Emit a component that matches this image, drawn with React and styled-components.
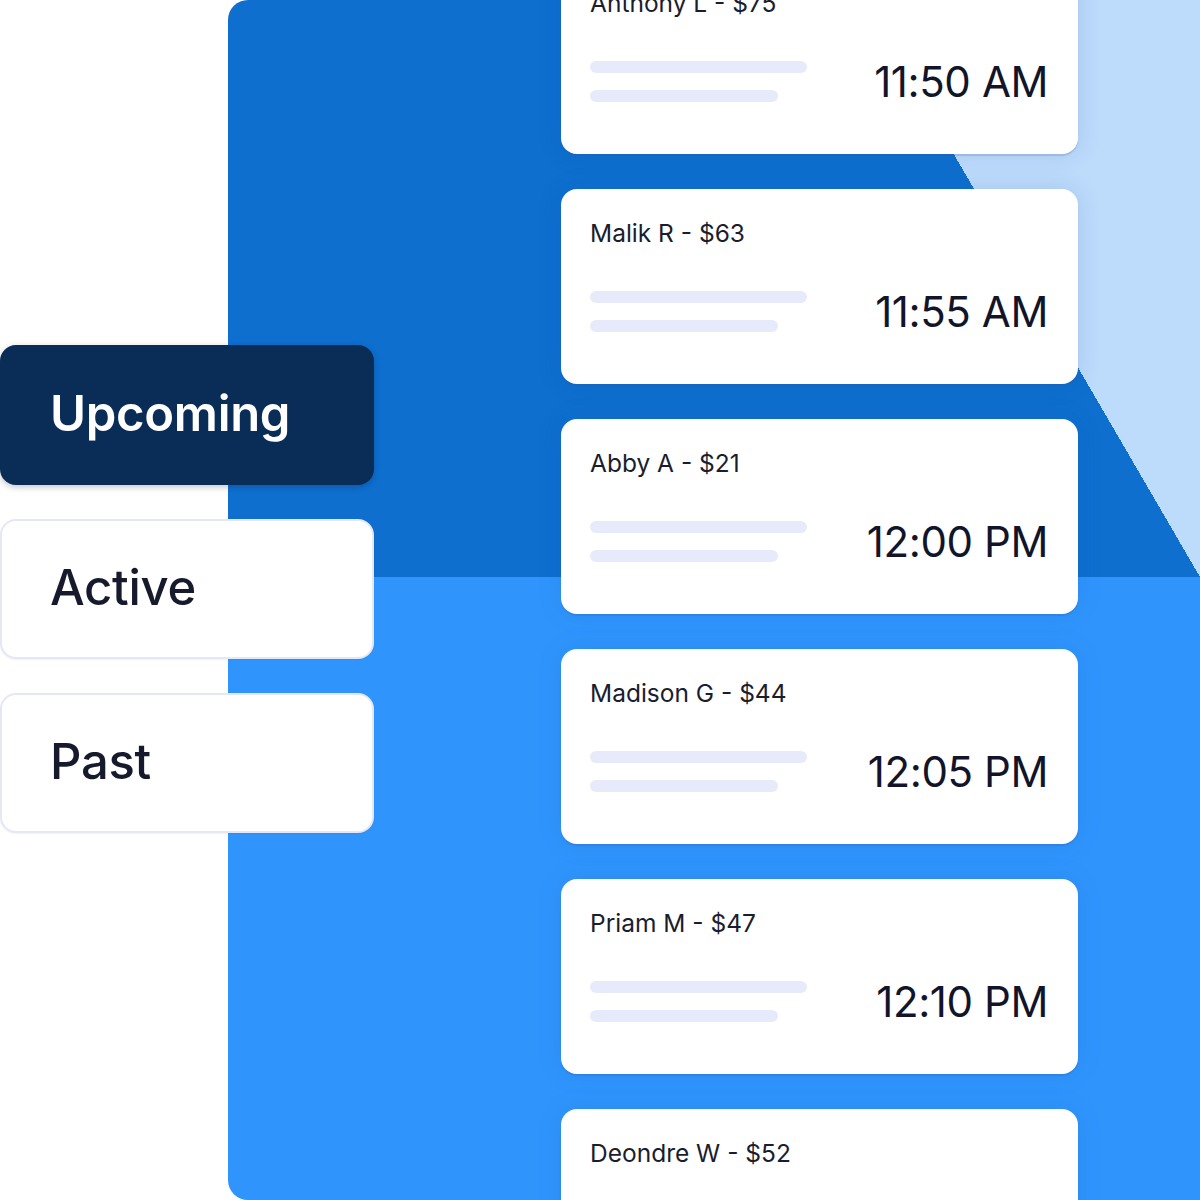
import React from "react";
import styled, { createGlobalStyle } from "styled-components";

const Global = createGlobalStyle`
  html, body { margin: 0; padding: 0; background: #ffffff; }
  body { font-family: Inter, "Noto Sans", sans-serif; }
`;

const Page = styled.div`
  width: 1200px;
  height: 1200px;
  overflow: hidden;
  padding-left: 228px;
  box-sizing: border-box;
  background: #ffffff;
`;

const Panel = styled.div`
  height: 1200px;
  border-radius: 20px 0 0 20px;
  display: flex;
  align-items: flex-start;
  background:
    linear-gradient(to top right, transparent 50%, #bddbfb 50%) right top / 336px 577px no-repeat,
    linear-gradient(to bottom, #0e6fcf 577px, #2f95fd 577px);
`;

const TabList = styled.div`
  margin-left: -228px;
  margin-top: 345px;
  width: 374px;
  flex: none;
  display: flex;
  flex-direction: column;
  gap: 34px;
`;

const Tab = styled.div`
  height: 140px;
  box-sizing: border-box;
  border-radius: 16px;
  display: flex;
  align-items: center;
  padding-left: 48px;
  padding-bottom: 3px;
  font-size: 49px;
  letter-spacing: -0.3px;
  font-weight: ${(p) => (p.$active ? 600 : 500)};
  color: ${(p) => (p.$active ? "#ffffff" : "#161a2c")};
  background: ${(p) => (p.$active ? "#092d56" : "#ffffff")};
  border: 2px solid ${(p) => (p.$active ? "#092d56" : "#e6e7f5")};
  box-shadow: ${(p) =>
    p.$active ? "0 2px 6px rgba(5, 20, 50, 0.25)" : "0 1px 2px rgba(20, 30, 80, 0.06)"};
`;

const CardColumn = styled.div`
  margin-left: 187px;
  margin-top: -41px;
  width: 517px;
  flex: none;
  display: flex;
  flex-direction: column;
  gap: 35px;
`;

const Card = styled.div`
  height: 195px;
  box-sizing: border-box;
  background: #ffffff;
  border-radius: 16px;
  padding: 30px 30px 0 29px;
  display: flex;
  flex-direction: column;
  box-shadow: 0 2px 1px rgba(60, 80, 140, 0.18), 0 0 24px rgba(20, 70, 150, 0.14);
`;

const Name = styled.div`
  font-size: 24.5px;
  line-height: 29px;
  font-weight: 400;
  color: #1a1d2e;
`;

const Row = styled.div`
  margin-top: 38px;
  display: flex;
  align-items: center;
  justify-content: space-between;
`;

const Bars = styled.div`
  display: flex;
  flex-direction: column;
  gap: 17px;
`;

const Bar = styled.div`
  height: 12px;
  width: ${(p) => p.$w}px;
  border-radius: 6px;
  background: #e7eafa;
`;

const Time = styled.div`
  font-size: 42px;
  line-height: 51px;
  font-weight: 400;
  color: #12152a;
  letter-spacing: -0.4px;
`;

const appointments = [
  { name: "Anthony L - $75", time: "11:50 AM" },
  { name: "Malik R - $63", time: "11:55 AM" },
  { name: "Abby A - $21", time: "12:00 PM" },
  { name: "Madison G - $44", time: "12:05 PM" },
  { name: "Priam M - $47", time: "12:10 PM" },
  { name: "Deondre W - $52", time: "12:15 PM" },
];

export default function App() {
  return (
    <>
      <Global />
      <Page>
        <Panel>
          <TabList>
            <Tab $active>Upcoming</Tab>
            <Tab>Active</Tab>
            <Tab>Past</Tab>
          </TabList>
          <CardColumn>
            {appointments.map((a) => (
              <Card key={a.name}>
                <Name>{a.name}</Name>
                <Row>
                  <Bars>
                    <Bar $w={217} />
                    <Bar $w={188} />
                  </Bars>
                  <Time>{a.time}</Time>
                </Row>
              </Card>
            ))}
          </CardColumn>
        </Panel>
      </Page>
    </>
  );
}
